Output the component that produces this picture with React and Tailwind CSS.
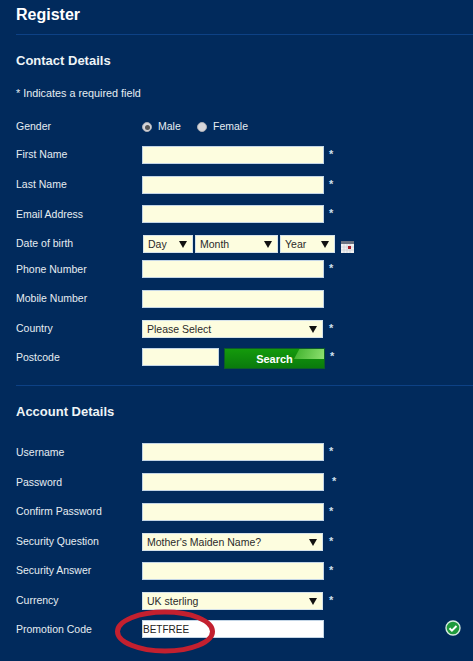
const font = { fontFamily: '"Liberation Sans", Arial, sans-serif' };

function Star({ className = "ml-[5px]" }) {
  return <span className={`${className} text-[11px] font-bold text-[#cfe0ee] -translate-y-px`}>*</span>;
}

function Field({ className = "w-[182px]", bg = "bg-[#fdfddf]", children }) {
  return (
    <div className={`${className} ${bg} h-[18px] border border-[#c3d5e6] flex items-center`}>
      {children}
    </div>
  );
}

function Select({ label, className }) {
  return (
    <div className={`${className} pl-[4px] pr-[5px] h-[18px] bg-[#fdfddf] border border-[#d5e2ea] flex items-center justify-between text-[10.5px] text-[#2a2a2a]`}>
      <span className="pt-px">{label}</span>
      <svg width="8" height="7" viewBox="0 0 8 7"><path d="M0 0h8L4 7z" fill="#111" /></svg>
    </div>
  );
}

function Row({ label, className, low, children }) {
  return (
    <div className={`${className} h-[18px] flex items-center pl-[16px]`}>
      <span className={`${low ? "pt-[2px]" : ""} w-[126px] shrink-0 text-[#e6edf2] text-[10.5px]`}>{label}</span>
      {children}
    </div>
  );
}

function Radio({ checked }) {
  return (
    <span className="w-[10px] h-[10px] rounded-full bg-[#d6d6da] border border-[#a9acb4] flex items-center justify-center">
      {checked && <span className="w-[5px] h-[5px] rounded-full bg-[#555]" />}
    </span>
  );
}

function Calendar() {
  return (
    <svg className="ml-[6px] mt-[6px]" width="13" height="12" viewBox="0 0 13 12">
      <rect x="0" y="0" width="13" height="12" fill="#f1f1f1" />
      <rect x="0" y="0" width="13" height="3" fill="#6b7280" />
      <path d="M0 6h13M0 9h13M3 3v9M6 3v9M9 3v9" stroke="#c4c8ce" strokeWidth="0.6" />
      <rect x="7" y="5" width="3" height="3" fill="#a61e2a" />
    </svg>
  );
}

export default function App() {
  return (
    <div style={font} className="relative w-[473px] h-[661px] overflow-hidden bg-[#012a5c] text-[#e6edf2] flex flex-col">
      <h1 className="pl-[16px] mt-[6px] h-[18px] leading-[18px] text-[16px] font-bold text-white">Register</h1>
      <div className="ml-[16px] mt-[10px] h-px bg-[#0d4185]" />
      <h2 className="pl-[16px] mt-[18px] h-[16px] leading-[16px] text-[13px] font-bold text-[#eef4f6]">Contact Details</h2>
      <p className="pl-[16px] mt-[17px] h-[14px] leading-[14px] text-[10.8px]">* Indicates a required field</p>

      <Row label="Gender" className="mt-[18px]">
        <Radio checked />
        <span className="ml-[6px] text-[10.5px] w-[39px]">Male</span>
        <Radio />
        <span className="ml-[6px] text-[10.5px]">Female</span>
      </Row>
      <Row label="First Name" className="mt-[10px]"><Field /><Star /></Row>
      <Row label="Last Name" className="mt-[12px]"><Field /><Star /></Row>
      <Row label="Email Address" low className="mt-[11px]"><Field /><Star /></Row>
      <Row label="Date of birth" className="mt-[12px]">
        <div className="flex items-start gap-[2px] ml-px">
          <Select label="Day" className="w-[50px]" />
          <Select label="Month" className="w-[83px]" />
          <Select label="Year" className="w-[55px]" />
        </div>
        <Calendar />
      </Row>
      <Row label="Phone Number" low className="mt-[7px]"><Field /><Star /></Row>
      <Row label="Mobile Number" className="mt-[12px]"><Field /></Row>
      <Row label="Country" className="mt-[12px]">
        <Select label="Please Select" className="w-[181px]" />
        <Star className="ml-[6px]" />
      </Row>
      <Row label="Postcode" low className="mt-[10px]">
        <Field className="w-[77px]" />
        <button className="relative overflow-hidden ml-[5px] w-[101px] h-[21px] mt-[3px] pt-px border border-[#0d5c2a] bg-[linear-gradient(#149a0c,#0a7a0c)] text-white text-[11px] font-bold">
          <span className="absolute right-0 top-0 w-[30px] h-[10px] [clip-path:polygon(18%_0,100%_0,100%_100%,0_100%)] bg-[linear-gradient(110deg,#3cb02a,#8fe070)]" />
          <span className="relative">Search</span>
        </button>
        <Star />
      </Row>

      <div className="ml-[16px] mt-[19px] h-px bg-[#0d4185]" />
      <h2 className="pl-[16px] mt-[18px] h-[16px] leading-[16px] text-[13px] font-bold text-[#eef4f6]">Account Details</h2>

      <Row label="Username" low className="mt-[23px]"><Field /><Star /></Row>
      <Row label="Password" low className="mt-[12px]"><Field /><Star className="ml-[8px]" /></Row>
      <Row label="Confirm Password" className="mt-[12px]"><Field /><Star /></Row>
      <Row label="Security Question" className="mt-[12px]">
        <Select label="Mother's Maiden Name?" className="w-[181px]" />
        <Star className="ml-[6px]" />
      </Row>
      <Row label="Security Answer" className="mt-[11px]"><Field /><Star /></Row>
      <Row label="Currency" className="mt-[12px]">
        <Select label="UK sterling" className="w-[181px]" />
        <Star className="ml-[6px]" />
      </Row>
      <Row label="Promotion Code" low className="mt-[10px]">
        <Field bg="bg-white">
          <input readOnly defaultValue="BETFREE" className="w-full h-full p-0 text-[10px] text-[#222] outline-none" />
        </Field>
      </Row>

      <svg className="absolute left-[114px] top-[608px]" width="102" height="47" viewBox="0 0 102 47">
        <ellipse cx="51" cy="23.5" rx="47.5" ry="19.5" fill="none" stroke="#c3202f" strokeWidth="5" />
      </svg>
      <svg className="absolute left-[445px] top-[620px]" width="16" height="16" viewBox="0 0 16 16">
        <circle cx="8" cy="8" r="7" fill="#1f9a3c" stroke="#d7ece0" strokeWidth="1.4" />
        <path d="M4.5 8.2l2.4 2.4 4.6-4.6" fill="none" stroke="#fff" strokeWidth="2" />
      </svg>
    </div>
  );
}
